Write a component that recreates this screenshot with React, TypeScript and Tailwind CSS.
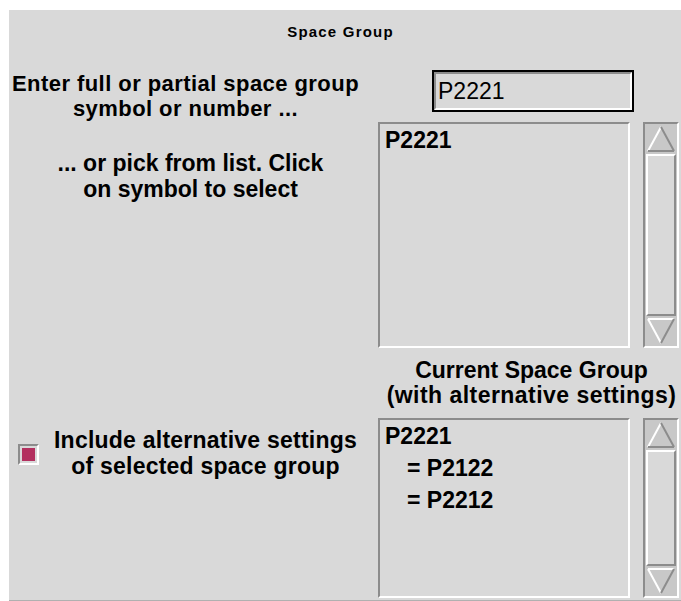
import React from "react";

const font = { fontFamily: '"Liberation Sans", Arial, sans-serif' };

function ArrowButton({ up }: { up: boolean }) {
  return (
    <div className="h-[30px] w-full flex items-center justify-center">
      <svg width="30" height="28" viewBox="0 0 30 28">
        {up ? (
          <>
            <polygon points="15,2 28,26 2,26" fill="#c8c8c8" />
            <line x1="15" y1="2" x2="2" y2="26" stroke="#ffffff" strokeWidth="2" />
            <line x1="15" y1="2" x2="28" y2="26" stroke="#8c8c8c" strokeWidth="2" />
            <line x1="2" y1="26" x2="28" y2="26" stroke="#8c8c8c" strokeWidth="2" />
          </>
        ) : (
          <>
            <polygon points="2,2 28,2 15,26" fill="#c8c8c8" />
            <line x1="2" y1="2" x2="28" y2="2" stroke="#ffffff" strokeWidth="2" />
            <line x1="2" y1="2" x2="15" y2="26" stroke="#ffffff" strokeWidth="2" />
            <line x1="28" y1="2" x2="15" y2="26" stroke="#8c8c8c" strokeWidth="2" />
          </>
        )}
      </svg>
    </div>
  );
}

function Scrollbar() {
  return (
    <div className="w-[36px] h-full flex flex-col bg-[#c8c8c8] border-2 border-t-[#8c8c8c] border-l-[#8c8c8c] border-r-white border-b-white">
      <ArrowButton up />
      <div className="flex-1 bg-[#d9d9d9] border-2 border-t-white border-l-white border-r-[#8c8c8c] border-b-[#8c8c8c] mx-[1px]" />
      <ArrowButton up={false} />
    </div>
  );
}

function ListBox({ height, children }: { height: string; children?: React.ReactNode }) {
  return (
    <div className={`flex gap-[13px] ${height}`}>
      <div className="w-[252px] h-full border-2 border-t-[#8c8c8c] border-l-[#8c8c8c] border-r-white border-b-white px-[5px] text-[23px] font-bold text-black leading-[32px]">
        {children}
      </div>
      <Scrollbar />
    </div>
  );
}

export default function App() {
  return (
    <div className="w-[681px] h-[601px] bg-white pt-[10px] pl-[9px]" style={font}>
      <div className="h-[591px] bg-[#d9d9d9] border-b border-[#b0b0b0] text-black">
        <div className="h-[60px] pt-[12px] leading-[20px] text-center pr-[9px]">
          <span className="text-[15px] font-bold tracking-[0.08em]">Space Group</span>
        </div>

        <div className="flex">
          {/* left column */}
          <div className="w-[369px] flex flex-col text-[23px] font-bold">
            <div className="pt-[1px] text-[22px] leading-[25px] tracking-[0.02em] text-center pr-[16px] whitespace-nowrap">
              Enter full or partial space group
              <br />
              symbol or number ...
            </div>
            <div className="mt-[29px] leading-[26px] text-center pr-[6px]">
              ... or pick from list. Click
              <br />
              on symbol to select
            </div>
            <div className="mt-[225px] flex items-start gap-[15px] pl-[9px]">
              <div className="mt-[17px] w-[21px] h-[21px] border-2 border-t-[#8c8c8c] border-l-[#8c8c8c] border-r-white border-b-white p-[2px] shrink-0">
                <div className="w-full h-full bg-[#b3305f]" />
              </div>
              <div className="text-center leading-[26px] tracking-[0.01em] whitespace-nowrap">
                Include alternative settings
                <br />
                of selected space group
              </div>
            </div>
          </div>

          {/* right column */}
          <div className="flex-1 flex flex-col">
            <div className="h-[52px] pl-[54px]">
              <div className="w-[202px] h-[42px] border-2 border-black">
                <div className="w-full h-full border-2 border-t-[#8c8c8c] border-l-[#8c8c8c] border-r-white border-b-white px-[2px] text-[23px] leading-[34px]">
                  P2221
                </div>
              </div>
            </div>
            <ListBox height="h-[226px]">
              <div className="leading-[33px]">P2221</div>
            </ListBox>
            <div className="h-[70px] pt-[10px] flex flex-col items-center text-[23px] font-bold leading-[25px] pl-[4px] whitespace-nowrap">
              <span>Current Space Group</span>
              <span className="tracking-[0.02em]">(with alternative settings)</span>
            </div>
            <ListBox height="h-[180px]">
              <div>P2221</div>
              <div className="pl-[22px]">= P2122</div>
              <div className="pl-[22px]">= P2212</div>
            </ListBox>
          </div>
        </div>
      </div>
    </div>
  );
}
